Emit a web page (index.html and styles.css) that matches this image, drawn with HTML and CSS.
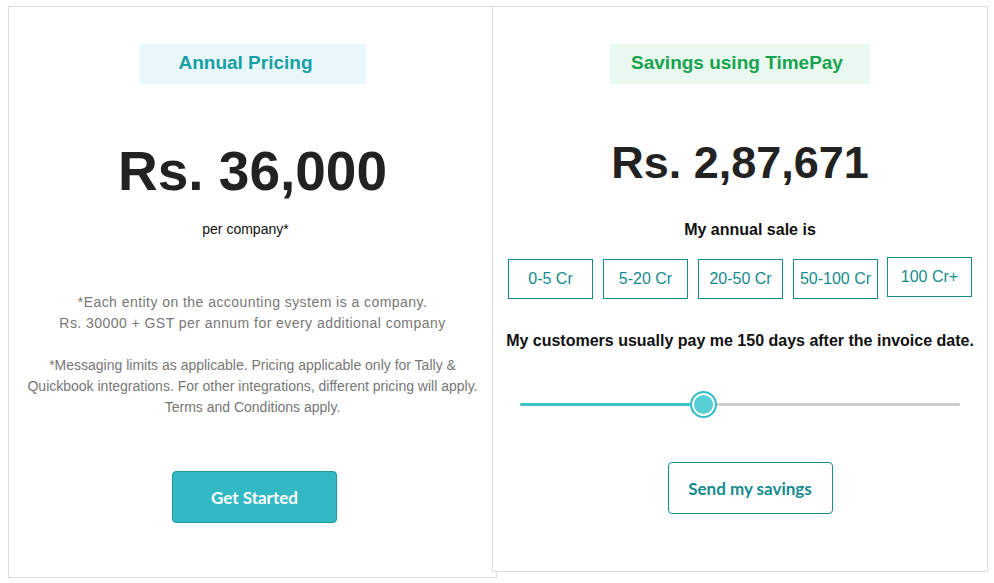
FILE: index.html
```html
<!DOCTYPE html>
<html lang="en">
<head>
  <meta charset="UTF-8" />
  <title>TimePay Pricing</title>
  <link rel="stylesheet" href="styles.css">
</head>
<body>

  <div class="cards">
    <div class="card card-left">
      <div class="tag tag-blue">Annual Pricing</div>
      <div class="price price-big">Rs. 36,000</div>
      <div class="per">per company*</div>

      <p class="note note-spaced">*Each entity on the accounting system is a company.<br>
        Rs. 30000 + GST per annum for every additional company</p>
      <p class="note note-wide">*Messaging limits as applicable. Pricing applicable only for Tally &amp;
        Quickbook integrations. For other integrations, different pricing will apply.
        Terms and Conditions apply.</p>

      <button class="btn btn-fill">Get Started</button>
    </div>

    <div class="card card-right">
      <div class="tag tag-green">Savings using TimePay</div>
      <div class="price price-mid">Rs. 2,87,671</div>
      <div class="label label-sale">My annual sale is</div>

      <div class="ranges">
        <button class="range">0-5 Cr</button>
        <button class="range">5-20 Cr</button>
        <button class="range">20-50 Cr</button>
        <button class="range">50-100 Cr</button>
        <button class="range range-up">100 Cr+</button>
      </div>

      <div class="label label-days">My customers usually pay me 150 days after the invoice date.</div>

      <div class="slider">
        <div class="track">
          <div class="fill" style="width: 41.5%"></div>
          <div class="thumb" style="left: 41.5%"></div>
        </div>
      </div>

      <button class="btn btn-line">Send my savings</button>
    </div>
  </div>

</body>
</html>
```

FILE: styles.css
```css
body {
  margin: 0;
  padding: 6px 0 0 8px;
  background-color: #fff;
  font-family: 'Liberation Sans', Arial, sans-serif;
}
.cards {
  display: flex;
  align-items: flex-start;
}
.card {
  box-sizing: border-box;
  border: 1px solid #dcdcdc;
  background-color: #fff;
  display: flex;
  flex-direction: column;
  align-items: center;
}
.card-left {
  width: 489px;
  height: 572px;
  padding-top: 37px;
}
.card-right {
  width: 496px;
  height: 566px;
  margin-left: -5px;
  padding-top: 37px;
}
.tag {
  box-sizing: border-box;
  height: 40px;
  line-height: 38px;
  font-size: 19px;
  font-weight: bold;
  text-align: center;
  border-radius: 2px;
}
.tag-blue {
  width: 227px;
  padding-right: 14px;
  background-color: #e8f7f9;
  color: #17a0a4;
}
.tag-green {
  width: 260px;
  padding-right: 6px;
  background-color: #e9f9ef;
  color: #18a350;
}
.price {
  font-weight: bold;
  color: #222;
}
.price-big {
  font-size: 55px;
  margin-top: 54px;
  line-height: 66px;
}
.price-mid {
  font-size: 45px;
  margin-top: 52px;
  line-height: 54px;
}
.per {
  font-size: 14px;
  margin-top: 17px;
  padding-right: 14px;
  color: #111;
}
.note {
  margin: 0;
  font-size: 14px;
  line-height: 21px;
  color: #777;
  text-align: center;
}
.card-left .note-spaced {
  margin-top: 55px;
  letter-spacing: 0.45px;
}
.card-left .note-wide {
  margin-top: 21px;
  padding: 0 14px;
}
.label {
  font-size: 16px;
  font-weight: bold;
  color: #111;
}
.label-sale {
  margin-top: 31px;
  padding-left: 20px;
}
.label-days {
  margin-top: 33px;
}
.ranges {
  display: flex;
  gap: 10px;
  margin-top: 20px;
}
.range {
  width: 85px;
  height: 40px;
  background-color: #fff;
  border: 1px solid #168b8f;
  color: #168b8f;
  font-family: 'Liberation Sans', Arial, sans-serif;
  font-size: 16px;
  padding: 0;
}
.range-up {
  margin-top: -2px;
  margin-left: -1px;
}
.slider {
  width: 440px;
  margin-top: 53px;
}
.track {
  position: relative;
  height: 3px;
  border-radius: 2px;
  background-color: #cfcfcf;
}
.fill {
  height: 3px;
  border-radius: 2px;
  background-color: #3cc4ca;
}
.thumb {
  position: absolute;
  top: -12px;
  width: 23px;
  height: 23px;
  margin-left: -13px;
  border-radius: 50%;
  border: 2px solid #36bec5;
  background-color: #56cfd5;
  box-shadow: inset 0 0 0 2px #fff;
}
.btn {
  font-family: Lato, 'Open Sans', sans-serif;
  font-size: 17px;
  font-weight: bold;
  width: 165px;
  height: 52px;
  border-radius: 4px;
  cursor: pointer;
}
.btn-fill {
  margin-top: 53px;
  margin-left: 4px;
  background-color: #33b9c4;
  border: 1px solid #1a9aa0;
  color: #fff;
}
.btn-line {
  margin-top: 56px;
  margin-left: 20px;
  background-color: #fff;
  border: 1px solid #168b8f;
  color: #168b8f;
}
```
